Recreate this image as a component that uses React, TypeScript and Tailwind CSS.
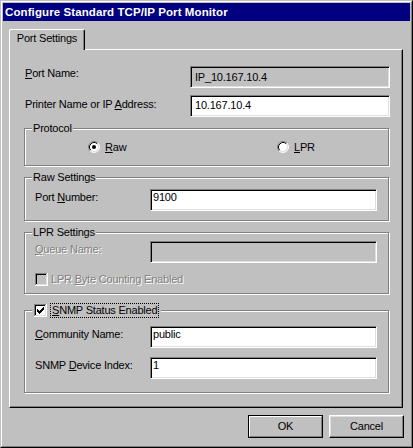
import React from 'react';

const sunken =
  'border border-t-[#808080] border-l-[#808080] border-r-white border-b-white shadow-[inset_1px_1px_0_#000,inset_-1px_-1px_0_#dfdfdf]';
const etched = 'relative w-[365px] border border-[#808080] shadow-[1px_1px_0_#fff,inset_1px_1px_0_#fff]';
const disabled = 'text-[#808080] [text-shadow:1px_1px_0_#fff]';

const U: React.FC<{ children: React.ReactNode }> = ({ children }) => (
  <span className="underline decoration-1 underline-offset-[1px]">{children}</span>
);

const Radio: React.FC<{ checked?: boolean }> = ({ checked }) => (
  <svg width="12" height="12" viewBox="0 0 12 12" className="shrink-0">
    <circle cx="6" cy="6" r="5" fill="#fff" />
    <path d="M2.11 9.89 A5.5 5.5 0 0 1 9.89 2.11" fill="none" stroke="#808080" />
    <path d="M9.89 2.11 A5.5 5.5 0 0 1 2.11 9.89" fill="none" stroke="#fff" />
    <path d="M2.82 9.18 A4.5 4.5 0 0 1 9.18 2.82" fill="none" stroke="#000" />
    <path d="M9.18 2.82 A4.5 4.5 0 0 1 2.82 9.18" fill="none" stroke="#dfdfdf" />
    {checked && <circle cx="6" cy="6" r="2" fill="#000" />}
  </svg>
);

const CheckBox: React.FC<{ checked?: boolean; off?: boolean }> = ({ checked, off }) => (
  <svg width="13" height="13" viewBox="0 0 13 13" shapeRendering="crispEdges" className="shrink-0">
    <rect width="13" height="13" fill="#fff" />
    <rect x="2" y="2" width="9" height="9" fill={off ? '#c0c0c0' : '#fff'} />
    <path d="M0 0h12v1H0z M0 0h1v12H0z" fill="#808080" />
    <path d="M1 1h10v1H1z M1 1h1v10H1z" fill="#000" />
    <path d="M1 11h11v1H1z M11 1h1v11h-1z" fill="#dfdfdf" />
    {checked && (
      <path
        d="M9 3h1v1h-1z M8 4h2v1h-2z M3 5h1v1h-1z M7 5h3v1h-3z M3 6h2v1h-2z M6 6h3v1h-3z M3 7h5v1h-5z M4 8h3v1h-3z M5 9h1v1h-1z"
        fill="#000"
      />
    )}
  </svg>
);

export default function App() {
  return (
    <div className="w-[413px] h-[448px] bg-[#c0c0c0] border border-t-[#c0c0c0] border-l-[#c0c0c0] border-r-black border-b-black font-['Liberation_Sans',Arial,sans-serif] text-[11px] leading-[13px] tracking-[-0.2px] text-black select-none">
      <div className="h-full border border-t-white border-l-white border-r-[#808080] border-b-[#808080] p-px flex flex-col">
        <div className="h-[18px] shrink-0 bg-[#000080] text-white font-bold text-[11.5px] leading-[18px] tracking-[0.1px] pl-[2px] whitespace-nowrap">
          Configure Standard TCP/IP Port Monitor
        </div>

        <div className="flex-1 px-[6px] pt-[8px] flex flex-col">
          {/* tab */}
          <div className="relative z-10 -mb-px w-[76px] h-[21px] bg-[#c0c0c0] border-l border-t border-r border-l-white border-t-white border-r-black rounded-t-[2px] shadow-[inset_-1px_0_0_#808080] flex justify-center pt-[2px]">
            Port Settings
          </div>

          {/* property page */}
          <div className="w-[394px] h-[359px] border border-t-white border-l-white border-r-black border-b-black shadow-[inset_-1px_-1px_0_#808080] pl-[14px] flex flex-col">
            <div className="flex mt-[16px]">
              <div className="w-[166px] pl-[1px] pt-[1px]">
                <U>P</U>ort Name:
              </div>
              <div className={`${sunken} w-[200px] h-[22px] bg-[#c0c0c0] pl-[4px] pt-[4px]`}>IP_10.167.10.4</div>
            </div>

            <div className="flex mt-[7px]">
              <div className="w-[166px] pl-[1px] pt-[3px]">
                Printer Name or IP <U>A</U>ddress:
              </div>
              <div className={`${sunken} w-[200px] h-[22px] bg-white pl-[4px] pt-[3px]`}>10.167.10.4</div>
            </div>

            <div className={`${etched} mt-[11px] h-[38px]`}>
              <div className="absolute left-[7px] top-[-7px] bg-[#c0c0c0] px-[1px]">Protocol</div>
              <div className="flex items-center h-[12px] mt-[12px] pl-[63px]">
                <div className="flex items-center w-[189px] gap-[5px]">
                  <Radio checked />
                  <span>
                    <U>R</U>aw
                  </span>
                </div>
                <div className="flex items-center gap-[5px]">
                  <Radio />
                  <span>
                    <U>L</U>PR
                  </span>
                </div>
              </div>
            </div>

            <div className={`${etched} mt-[11px] h-[44px]`}>
              <div className="absolute left-[7px] top-[-7px] bg-[#c0c0c0] px-[1px]">Raw Settings</div>
              <div className="flex mt-[11px]">
                <div className="w-[125px] pl-[10px] pt-[2px]">
                  Port <U>N</U>umber:
                </div>
                <div className={`${sunken} w-[227px] h-[22px] bg-white pl-[2px] pt-[1px]`}>9100</div>
              </div>
            </div>

            <div className={`${etched} mt-[11px] h-[62px]`}>
              <div className="absolute left-[7px] top-[-7px] bg-[#c0c0c0] px-[1px]">LPR Settings</div>
              <div className="flex mt-[8px]">
                <div className={`w-[125px] pl-[10px] pt-[2px] ${disabled}`}>
                  <U>Q</U>ueue Name:
                </div>
                <div className={`${sunken} w-[227px] h-[22px] bg-[#c0c0c0]`} />
              </div>
              <div className="flex items-center gap-[3px] mt-[10px] pl-[10px]">
                <CheckBox off />
                <span className={disabled}>
                  LPR <U>B</U>yte Counting Enabled
                </span>
              </div>
            </div>

            <div className={`${etched} mt-[16px] h-[83px]`}>
              <div className="absolute left-[7px] top-[-8px] bg-[#c0c0c0] px-[2px] flex items-center gap-[3px]">
                <CheckBox checked />
                <span className="border border-dotted border-black px-[1px]">
                  <U>S</U>NMP Status Enabled
                </span>
              </div>
              <div className="flex mt-[15px]">
                <div className="w-[125px] pl-[10px] pt-[2px]">
                  <U>C</U>ommunity Name:
                </div>
                <div className={`${sunken} w-[227px] h-[22px] bg-white pl-[2px] pt-[1px]`}>public</div>
              </div>
              <div className="flex mt-[9px]">
                <div className="w-[125px] pl-[10px] pt-[2px]">
                  SNMP <U>D</U>evice Index:
                </div>
                <div className={`${sunken} w-[227px] h-[22px] bg-white pl-[2px] pt-[1px]`}>1</div>
              </div>
            </div>
          </div>

          <div className="flex justify-end gap-[6px] mt-[7px]">
            <button className="w-[75px] h-[23px] border border-black p-0">
              <div className="h-full border border-t-white border-l-white border-r-[#808080] border-b-[#808080] flex items-center justify-center">
                OK
              </div>
            </button>
            <button className="w-[75px] h-[23px] border border-t-white border-l-white border-r-black border-b-black shadow-[inset_-1px_-1px_0_#808080,inset_1px_1px_0_#dfdfdf] flex items-center justify-center">
              Cancel
            </button>
          </div>
        </div>
      </div>
    </div>
  );
}
